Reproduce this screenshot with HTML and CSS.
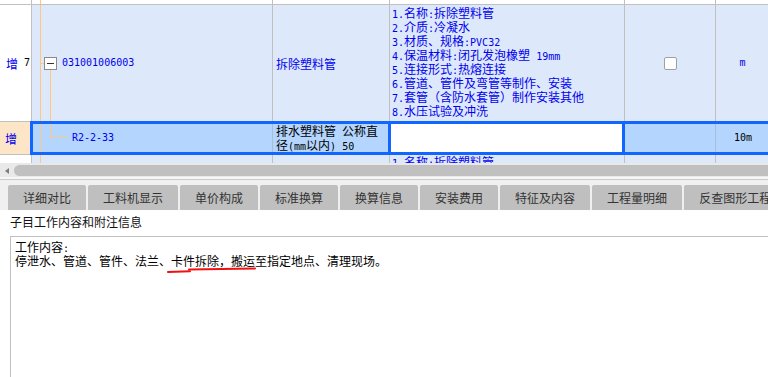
FILE: index.html
```html
<!DOCTYPE html>
<html lang="zh-CN">
<head>
<meta charset="utf-8">
<title>子目</title>
<link rel="stylesheet" href="styles.css">
</head>
<body>
<div class="app">
  <div class="grid">
    <div class="row r0">
      <div class="c c1"></div>
      <div class="c c2 tree"></div>
      <div class="c c3"></div>
      <div class="c c4"></div>
      <div class="c c5"></div>
      <div class="c c6"></div>
    </div>
    <div class="row r7">
      <div class="c c1 idx"><span class="zeng">增</span><span class="lat num">7</span></div>
      <div class="c c2 tree t7 bl"><span class="branch"></span><span class="tbox"><span class="minus"></span></span><span class="lat code">031001006003</span></div>
      <div class="c c3 name bl">拆除塑料管</div>
      <div class="c c4 feat bl">
        <div class="ln"><span class="lat">1.</span>名称<span class="lat">:</span>拆除塑料管</div>
        <div class="ln"><span class="lat">2.</span>介质<span class="lat">:</span>冷凝水</div>
        <div class="ln"><span class="lat">3.</span>材质、规格<span class="lat">:PVC32</span></div>
        <div class="ln"><span class="lat">4.</span>保温材料<span class="lat">:</span>闭孔发泡橡塑<span class="lat"> 19mm</span></div>
        <div class="ln"><span class="lat">5.</span>连接形式<span class="lat">:</span>热熔连接</div>
        <div class="ln"><span class="lat">6.</span>管道、管件及弯管等制作、安装</div>
        <div class="ln"><span class="lat">7.</span>套管（含防水套管）制作安装其他</div>
        <div class="ln"><span class="lat">8.</span>水压试验及冲洗</div>
      </div>
      <div class="c c5 chk bl"><span class="cb"></span></div>
      <div class="c c6 unit bl"><span class="lat">m</span></div>
    </div>
    <div class="row rsel">
      <div class="c1s"><span class="zeng">增</span></div>
      <div class="sel">
        <div class="c c2 ts"><span class="lat code">R2-2-33</span></div>
        <div class="c c3 desc">排水塑料管<span class="lat"> </span>公称直径<span class="lat">(mm</span>以内<span class="lat">) 50</span></div>
        <div class="focus"></div>
        <div class="c c5 sc"></div>
        <div class="c c6 qty"><span class="lat">10m</span></div>
      </div>
    </div>
    <div class="row rnext">
      <div class="c c1"></div>
      <div class="c c2 tree bl"></div>
      <div class="c c3 bl"></div>
      <div class="c c4 feat bl">
        <div class="ln"><span class="lat">1.</span>名称<span class="lat">:</span>拆除塑料管</div>
      </div>
      <div class="c c5 bl"></div>
      <div class="c c6 bl"></div>
    </div>
  </div>

  <div class="hscroll"><span class="arrow"></span><span class="thumb"></span></div>

  <div class="tabbar">
    <div class="tab">详细对比</div>
    <div class="tab">工料机显示</div>
    <div class="tab">单价构成</div>
    <div class="tab">标准换算</div>
    <div class="tab">换算信息</div>
    <div class="tab">安装费用</div>
    <div class="tab">特征及内容</div>
    <div class="tab">工程量明细</div>
    <div class="tab">反查图形工程量</div>
  </div>

  <div class="detail">
    <div class="dtitle">子目工作内容和附注信息</div>
    <div class="dbox">
      <div class="dline">工作内容<span class="lat">:</span></div>
      <div class="dline">停泄水、管道、管件、法兰、卡件拆除，搬运至指定地点、清理现场。</div>
      <svg class="mark" width="92" height="8" viewBox="0 0 92 8">
        <path d="M1 5 L23 4.2" stroke="#f01010" stroke-width="2" fill="none" stroke-linecap="round"/>
        <path d="M22 2.4 L88 1.6" stroke="#f01010" stroke-width="2" fill="none" stroke-linecap="round"/>
      </svg>
    </div>
  </div>
</div>
</body>
</html>
```
FILE: styles.css
```css
* { box-sizing: border-box; margin: 0; padding: 0; }
html, body { width: 768px; height: 377px; overflow: hidden; background: #fff; }
body {
  font-family: "Noto Sans CJK SC", "Noto Sans", sans-serif;
  font-size: 12px;
  color: #000;
}
.app { width: 768px; height: 377px; overflow: hidden; }

.lat { font-family: "DejaVu Sans Mono", "Liberation Mono", monospace; font-size: 10px; line-height: 1; }

/* grid */
.grid { height: 163px; overflow: hidden; width: 768px; }
.row { display: flex; white-space: nowrap; width: 820px; }
.c { border-right: 1px solid #c0c0c0; flex: none; overflow: hidden; }
.c1 { width: 32px; background: #fff; }
.c2 { width: 241px; }
.c3 { width: 117px; }
.c4 { width: 235px; }
.c5 { width: 91px; }
.c6 { width: 54px; border-right: 0; }
.bl { background-color: #dde9fb; }

.tree {
  background-image: linear-gradient(#fdc880, #fdc880);
  background-repeat: no-repeat;
  background-position: 8px 0;
  background-size: 1px 100%;
}

.r0 { height: 5px; border-bottom: 1px solid #c0c0c0; }
.r7 { height: 116px; color: #0000ee; }
.r7 .c { display: flex; align-items: center; }

.idx { padding-left: 6px; }
.idx .num { color: #000; margin-left: 6px; }
.zeng { color: #0000ee; }

.t7 {
  padding-left: 8px;
  background-image: linear-gradient(#fdc880, #fdc880), linear-gradient(#fdc880, #fdc880);
  background-position: 8px 0, 18px 64px;
  background-size: 1px 100%, 1px 100%;
  background-repeat: no-repeat;
}
.branch { width: 4px; height: 1px; background: #fdc880; flex: none; }
.tbox {
  width: 13px; height: 13px; border: 1px solid #8a8a8a; background: #fff;
  display: flex; align-items: center; justify-content: center; flex: none;
}
.minus { width: 7px; height: 1px; background: #333; }
.code { color: #0000ee; margin-left: 5px; }

.name { padding-left: 3px; }
.r7 .feat { display: block; padding: 1px 0 0 2px; }
.ln { line-height: 14px; height: 14px; color: #0000ee; white-space: nowrap; }

.chk { justify-content: center; }
.cb { width: 13px; height: 13px; border: 1px solid #a0a0a0; border-radius: 2px; background: #fff; }
.unit { justify-content: center; padding-right: 1px; }

/* selected row */
.rsel { height: 34px; }
.c1s {
  width: 30px; flex: none; background: #fde6c8;
  border-top: 1px solid #c0c0c0; border-bottom: 1px solid #c0c0c0;
  display: flex; align-items: center; padding-left: 5px;
}
.sel {
  flex: none; width: 790px; height: 34px;
  border: 3px solid #1166ff; border-right: 0;
  background: #b4d5fd; display: flex;
}
.sel .c { height: 28px; }
.sel .c2 { width: 240px; border-right-color: #a9bcd8; }
.sel .c3 { width: 115px; border-right: 0; }
.ts {
  display: flex; align-items: center; padding-left: 39px;
  background-image:
    linear-gradient(#fdc880, #fdc880),
    linear-gradient(#fdc880, #fdc880),
    linear-gradient(#fdc880, #fdc880);
  background-position: 7px 0, 17px 0, 17px 13px;
  background-size: 1px 100%, 1px 14px, 17px 1px;
  background-repeat: no-repeat;
}
.ts .code { margin-left: 0; }
.desc { white-space: normal; line-height: 14px; padding: 0 4px 0 3px; }
.focus { flex: none; width: 237px; height: 28px; background: #fff; border-left: 3px solid #1166ff; border-right: 3px solid #1166ff; }
.sc { border-right-color: #a9bcd8; }
.qty { display: flex; align-items: center; justify-content: center; }

/* next row */
.rnext { height: 8px; }
.rnext .feat { padding-left: 2px; }

/* horizontal scrollbar */
.hscroll {
  height: 16px; background: #e9e9e9; border-bottom: 2px solid #f7f7f7;
  display: flex; align-items: flex-start; padding-top: 2px;
}
.arrow {
  width: 0; height: 0; margin: 3px 0 0 5px;
  border-right: 4px solid #7d7d7d;
  border-top: 3px solid transparent; border-bottom: 3px solid transparent;
}
.thumb { flex: 1; height: 11px; margin-left: 5px; background: #c0c0c0; border-radius: 6px 0 0 6px; }

/* tabs */
.tabbar {
  border-top: 1px solid #cacaca; background: #f0f0f0;
  padding: 5px 0 0 8px; display: flex; gap: 2px; white-space: nowrap; overflow: hidden;
}
.tab {
  flex: none; height: 25px; padding: 0 15px; background: #bfbfbf; color: #333;
  line-height: 25px; font-size: 12px; border-radius: 2px 2px 0 0;
}

/* detail */
.detail { background: #fff; }
.dtitle { padding: 4px 10px 0; line-height: 16px; color: #111; }
.dbox {
  position: relative; margin: 6px 0 0 10px; height: 200px;
  border-top: 1px solid #c0c0c0; border-left: 1px solid #c0c0c0;
  padding: 3px 4px;
}
.dline { line-height: 14px; height: 14px; white-space: nowrap; }
.mark { position: absolute; left: 156px; top: 30px; }
```
